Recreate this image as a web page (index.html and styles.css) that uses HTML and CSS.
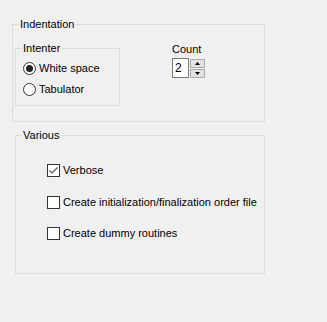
FILE: index.html
```html
<!DOCTYPE html>
<html>
<head>
<meta charset="utf-8">
<link rel="stylesheet" href="styles.css">
</head>
<body>
<div class="group indentation">
  <span class="group-label">Indentation</span>
  <div class="group intenter">
    <span class="group-label">Intenter</span>
    <label class="radio-row"><span class="radio checked"></span><span class="text">White space</span></label>
    <label class="radio-row second"><span class="radio"></span><span class="text">Tabulator</span></label>
  </div>
  <div class="count">
    <div class="count-label">Count</div>
    <div class="spinner">
      <div class="edit">2</div>
      <div class="spin-buttons">
        <div class="spin-btn"><svg width="5" height="3" viewBox="0 0 5 3"><path d="M0 3 L2.5 0 L5 3 Z" fill="#000"/></svg></div>
        <div class="spin-btn"><svg width="5" height="3" viewBox="0 0 5 3"><path d="M0 0 L5 0 L2.5 3 Z" fill="#000"/></svg></div>
      </div>
    </div>
  </div>
</div>
<div class="group various">
  <span class="group-label">Various</span>
  <label class="check-row first"><span class="checkbox"><svg width="11" height="11" viewBox="0 0 11 11"><path d="M1.5 5.5 L4 8 L9.5 2.5" fill="none" stroke="#555" stroke-width="1.2"/></svg></span><span class="text">Verbose</span></label>
  <label class="check-row second"><span class="checkbox"></span><span class="text">Create initialization/finalization order file</span></label>
  <label class="check-row third"><span class="checkbox"></span><span class="text">Create dummy routines</span></label>
</div>
</body>
</html>
```
FILE: styles.css
```css
html, body {
  margin: 0;
  background: #f0f0f0;
}
body {
  padding: 24px 0 0 12px;
  font-family: "Liberation Sans", Arial, sans-serif;
  font-size: 11px;
  line-height: 13px;
  color: #000;
  height: 322px;
  box-sizing: border-box;
}
.group {
  position: relative;
  border: 1px solid #dcdcdc;
  box-sizing: border-box;
}
.group-label {
  position: absolute;
  top: -7px;
  left: 6px;
  padding: 0 1px;
  background: #f0f0f0;
  white-space: nowrap;
}
.indentation {
  width: 253px;
  height: 98px;
  display: flex;
  align-items: flex-start;
  padding: 0 0 0 2px;
}
.intenter {
  width: 105px;
  height: 58px;
  margin-top: 23px;
  padding: 13px 0 0 7px;
  display: flex;
  flex-direction: column;
}
.radio-row {
  display: flex;
  align-items: center;
  height: 13px;
}
.radio-row.second {
  margin-top: 8px;
}
.radio {
  width: 13px;
  height: 13px;
  box-sizing: border-box;
  border: 1px solid #333;
  border-radius: 50%;
  background: #fff;
  margin-right: 3px;
  display: flex;
  align-items: center;
  justify-content: center;
}
.radio.checked::after {
  content: "";
  width: 7px;
  height: 7px;
  border-radius: 50%;
  background: #222;
}
.count {
  margin: 18px 0 0 52px;
}
.spinner {
  display: flex;
  margin-top: 2px;
}
.edit {
  width: 17px;
  height: 20px;
  box-sizing: border-box;
  border: 1px solid #7a7a7a;
  background: #fff;
  padding-left: 2px;
  line-height: 18px;
  font-size: 12px;
}
.spin-buttons {
  display: flex;
  flex-direction: column;
  margin: 1px 0 0 1px;
  gap: 1px;
}
.spin-btn {
  width: 15px;
  height: 9px;
  box-sizing: border-box;
  border: 1px solid #adadad;
  background: #e1e1e1;
  display: flex;
  align-items: center;
  justify-content: center;
}
.spin-btn svg {
  display: block;
}
.various {
  width: 250px;
  height: 139px;
  margin: 13px 0 0 3px;
  padding: 28px 0 0 31px;
  display: flex;
  flex-direction: column;
}
.check-row {
  display: flex;
  align-items: center;
  height: 13px;
}
.check-row.second {
  margin-top: 19px;
}
.check-row.third {
  margin-top: 18px;
}
.checkbox {
  width: 13px;
  height: 13px;
  box-sizing: border-box;
  border: 1px solid #333;
  background: #fff;
  margin-right: 3px;
  display: flex;
  align-items: center;
  justify-content: center;
}
.checkbox svg {
  display: block;
}
.text {
  white-space: nowrap;
}
```
